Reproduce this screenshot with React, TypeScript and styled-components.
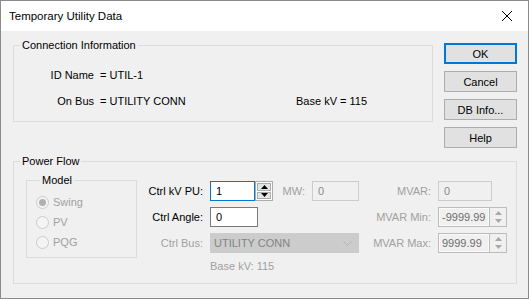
import React from 'react'
import styled, { createGlobalStyle } from 'styled-components'

const Global = createGlobalStyle`
  html, body { margin: 0; padding: 0; background: #fff; }
  body { font-family: "Liberation Sans", Arial, sans-serif; font-size: 11px; color: #000; }
  * { box-sizing: border-box; }
`

const Window = styled.div`
  width: 529px;
  height: 299px;
  border: 1px solid #8a8a8a;
  display: flex;
  flex-direction: column;
  background: #f0f0f0;
`

const TitleBar = styled.div`
  height: 30px;
  background: #fff;
  display: flex;
  align-items: center;
  justify-content: space-between;
  padding: 0 16px 0 8px;
  font-size: 11.5px;
  flex-shrink: 0;
`

const Body = styled.div`
  flex: 1;
  padding: 7px 11px 0 12px;
`

const TopRow = styled.div`
  display: flex;
  gap: 11px;
  align-items: flex-start;
`

const Group = styled.fieldset`
  margin: 0;
  padding: 0;
  border: 1px solid #dcdcdc;
  min-width: 0;
`

const Legend = styled.legend<{ $inset?: number }>`
  margin-left: ${p => p.$inset ?? 6}px;
  padding: 0 2px;
  line-height: 14px;
  color: #000;
`

const ConnGroup = styled(Group)`
  flex: 1;
`

const ConnGrid = styled.div`
  display: grid;
  grid-template-columns: 80px 202px auto;
  row-gap: 12px;
  padding: 16px 0 13px;
  line-height: 14px;
`

const InfoLabel = styled.span`
  text-align: right;
`

const InfoValue = styled.span`
  padding-left: 6px;
  white-space: nowrap;
`

const ButtonCol = styled.div`
  display: flex;
  flex-direction: column;
  gap: 7px;
  margin-top: 5px;
  width: 73px;
`

const Button = styled.button<{ $default?: boolean }>`
  height: 21px;
  width: 73px;
  padding: 0;
  background: #e1e1e1;
  border: ${p => (p.$default ? '2px solid #0078d7' : '1px solid #adadad')};
  font-family: inherit;
  font-size: 11px;
  color: #000;
`

const PowerGroup = styled(Group)`
  margin-top: 6px;
  height: 130px;
`

const PowerInner = styled.div`
  display: flex;
  align-items: flex-start;
  gap: 9px;
  padding: 5px 0 0 12px;
`

const ModelGroup = styled(Group)`
  width: 111px;
  padding: 5px 0 5px 9px;
`

const RadioRow = styled.div`
  height: 20px;
  display: flex;
  align-items: center;
  gap: 4px;
  color: #a0a0a0;
`

const RadioDot = styled.span<{ $checked?: boolean }>`
  width: 13px;
  height: 13px;
  border-radius: 50%;
  border: 1px solid #cccccc;
  background: #f4f4f4;
  display: inline-flex;
  align-items: center;
  justify-content: center;
  &::after {
    content: '';
    width: 7px;
    height: 7px;
    border-radius: 50%;
    background: ${p => (p.$checked ? '#b0b0b0' : 'transparent')};
  }
`

const Controls = styled.div`
  display: grid;
  grid-template-columns: 64px 63px 39px 48px 78px 70px;
  grid-template-rows: 20px 20px 20px 14px;
  row-gap: 6px;
  margin-top: 8px;
  align-items: center;
`

const FieldLabel = styled.span<{ $dim?: boolean }>`
  text-align: right;
  padding-right: 7px;
  white-space: nowrap;
  color: ${p => (p.$dim ? '#a0a0a0' : '#000')};
`

const TextBox = styled.input<{ $w: number; $state?: 'focus' | 'normal' | 'disabled' }>`
  width: ${p => p.$w}px;
  height: 20px;
  margin: 0;
  padding: 0 0 0 5px;
  font-family: inherit;
  font-size: 11px;
  outline: none;
  border: 1px solid
    ${p => (p.$state === 'focus' ? '#0078d7' : p.$state === 'disabled' ? '#cccccc' : '#7a7a7a')};
  background: ${p => (p.$state === 'disabled' ? '#f0f0f0' : '#fff')};
  color: ${p => (p.$state === 'disabled' ? '#8a8a8a' : '#000')};
`

const SpinWrap = styled.div`
  display: flex;
  height: 20px;
`

const SpinBox = styled.input<{ $w: number; $dim?: boolean; $focus?: boolean }>`
  width: ${p => p.$w}px;
  height: 20px;
  margin: 0;
  padding: 0 0 0 ${p => (p.$dim ? 3 : 5)}px;
  font-family: inherit;
  font-size: 11px;
  outline: none;
  border: 1px solid ${p => (p.$focus ? '#0078d7' : '#bcbcbc')};
  border-right: ${p => (p.$focus ? '1px solid #0078d7' : 'none')};
  background: ${p => (p.$dim ? '#f0f0f0' : '#fff')};
  color: ${p => (p.$dim ? '#6d6d6d' : '#000')};
  box-shadow: ${p => (p.$dim ? 'inset 0 0 0 1px #fafafa' : 'none')};
`

const Spinner = styled.div<{ $dim?: boolean }>`
  width: 18px;
  height: 20px;
  display: flex;
  flex-direction: column;
  border: 1px solid ${p => (p.$dim ? '#bcbcbc' : '#adadad')};
  background: ${p => (p.$dim ? '#f0f0f0' : '#fff')};
  padding: 1px;
  gap: 1px;
`

const SpinHalf = styled.div<{ $dim?: boolean }>`
  flex: 1;
  display: flex;
  align-items: center;
  justify-content: center;
  background: ${p => (p.$dim ? '#f0f0f0' : '#e5e5e5')};
  border: ${p => (p.$dim ? 'none' : '1px solid #adadad')};
`

const Combo = styled.div`
  grid-column: span 3;
  width: 149px;
  height: 20px;
  background: #cccccc;
  border: 1px solid #cccccc;
  display: flex;
  align-items: center;
  justify-content: space-between;
  padding: 0 6px 0 3px;
  color: #838383;
`

const Note = styled.span`
  grid-column: 2 / span 3;
  color: #a0a0a0;
  line-height: 14px;
`

const Empty = styled.span``

const Arrow: React.FC<{ up?: boolean; color: string }> = ({ up, color }) => (
  <svg width="7" height="4" viewBox="0 0 7 4">
    <path d={up ? 'M0 4 L3.5 0 L7 4 Z' : 'M0 0 L3.5 4 L7 0 Z'} fill={color} />
  </svg>
)

const Spin: React.FC<{ value: string; w: number; dim?: boolean; focus?: boolean }> = ({ value, w, dim, focus }) => (
  <SpinWrap>
    <SpinBox $w={w} $dim={dim} $focus={focus} value={value} readOnly />
    <Spinner $dim={dim}>
      <SpinHalf $dim={dim}><Arrow up color={dim ? '#a8a8a8' : '#000'} /></SpinHalf>
      <SpinHalf $dim={dim}><Arrow color={dim ? '#a8a8a8' : '#000'} /></SpinHalf>
    </Spinner>
  </SpinWrap>
)

export default function App() {
  return (
    <>
      <Global />
      <Window>
        <TitleBar>
          <span>Temporary Utility Data</span>
          <svg width="10" height="10" viewBox="0 0 10 10">
            <path d="M0 0 L10 10 M10 0 L0 10" stroke="#000" strokeWidth="1" />
          </svg>
        </TitleBar>
        <Body>
          <TopRow>
            <ConnGroup>
              <Legend>Connection Information</Legend>
              <ConnGrid>
                <InfoLabel>ID Name</InfoLabel>
                <InfoValue>= UTIL-1</InfoValue>
                <Empty />
                <InfoLabel>On Bus</InfoLabel>
                <InfoValue>= UTILITY CONN</InfoValue>
                <span>Base kV = 115</span>
              </ConnGrid>
            </ConnGroup>
            <ButtonCol>
              <Button $default>OK</Button>
              <Button>Cancel</Button>
              <Button>DB Info...</Button>
              <Button>Help</Button>
            </ButtonCol>
          </TopRow>

          <PowerGroup>
            <Legend>Power Flow</Legend>
            <PowerInner>
              <ModelGroup>
                <Legend $inset={4}>Model</Legend>
                <RadioRow><RadioDot $checked />Swing</RadioRow>
                <RadioRow><RadioDot />PV</RadioRow>
                <RadioRow><RadioDot />PQG</RadioRow>
              </ModelGroup>

              <Controls>
                <FieldLabel>Ctrl kV PU:</FieldLabel>
                <Spin value="1" w={45} focus />
                <FieldLabel $dim>MW:</FieldLabel>
                <TextBox $w={47} $state="disabled" value="0" readOnly />
                <FieldLabel $dim>MVAR:</FieldLabel>
                <TextBox $w={54} $state="disabled" value="0" readOnly />

                <FieldLabel>Ctrl Angle:</FieldLabel>
                <TextBox $w={48} $state="normal" value="0" readOnly />
                <Empty />
                <Empty />
                <FieldLabel $dim>MVAR Min:</FieldLabel>
                <Spin value="-9999.99" w={51} dim />

                <FieldLabel $dim>Ctrl Bus:</FieldLabel>
                <Combo>
                  <span>UTILITY CONN</span>
                  <svg width="9" height="5" viewBox="0 0 9 5">
                    <path d="M0.5 0.5 L4.5 4.5 L8.5 0.5" stroke="#b4b4b4" fill="none" />
                  </svg>
                </Combo>
                <FieldLabel $dim>MVAR Max:</FieldLabel>
                <Spin value="9999.99" w={51} dim />

                <Empty />
                <Note>Base kV: 115</Note>
              </Controls>
            </PowerInner>
          </PowerGroup>
        </Body>
      </Window>
    </>
  )
}
